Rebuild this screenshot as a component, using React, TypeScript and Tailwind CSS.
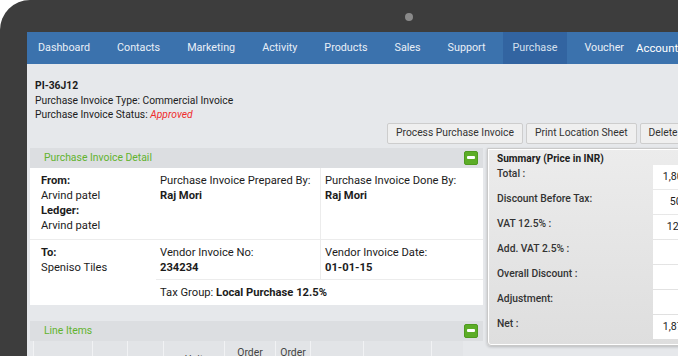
import React from "react";

const navItems = ["Dashboard", "Contacts", "Marketing", "Activity", "Products", "Sales", "Support", "Purchase", "Voucher"];

const summaryRows = [
  { label: "Total :", value: "1,800.00" },
  { label: "Discount Before Tax:", value: "50.00" },
  { label: "VAT 12.5% :", value: "125.00" },
  { label: "Add. VAT 2.5% :", value: "" },
  { label: "Overall Discount :", value: "" },
  { label: "Adjustment:", value: "" },
  { label: "Net :", value: "1,875.00" },
];

const lineCols = [
  { w: "w-[59px]", top: "", bottom: "" },
  { w: "w-[35px]", top: "", bottom: "" },
  { w: "w-[36px]", top: "", bottom: "" },
  { w: "w-[61px]", top: "Unit", bottom: "" },
  { w: "w-[51px]", top: "Order", bottom: "Qty" },
  { w: "w-[35px]", top: "Order", bottom: "Rate" },
  { w: "w-[53px]", top: "", bottom: "" },
  { w: "w-[68px]", top: "", bottom: "" },
  { w: "w-[32px]", top: "", bottom: "" },
];

const MinusBtn = () => (
  <div className="w-[14px] h-[14px] rounded-[2px] bg-[#5cad27] border border-[#4e9a1f] flex items-center justify-center">
    <div className="w-[8px] h-[3px] bg-white rounded-[1px]" />
  </div>
);

const PanelHeader = ({ title }: { title: string }) => (
  <div className="h-[20px] bg-[#dcdee1] flex items-center justify-between pl-[14px] pr-[5px]">
    <span className="text-[10.4px] text-[#62b32e]">{title}</span>
    <MinusBtn />
  </div>
);

export default function App() {
  return (
    <div className="w-[678px] h-[356px] overflow-hidden bg-white" style={{ fontFamily: "Roboto, 'Liberation Sans', sans-serif" }}>
      <div className="relative w-[760px] h-full bg-[#3d3d3d] rounded-tl-[30px] pl-[27px] pt-[32px]">
        {/* camera */}
        <div className="absolute left-[405px] top-[13px] w-[8px] h-[8px] rounded-full bg-[#8a8a8a]" />

        <div className="w-[733px] h-full bg-[#e6e8eb]">
          {/* nav */}
          <div className="h-[32px] bg-[#3b72ad] flex items-stretch pl-[1px] gap-[7px] text-[10.75px] text-[#e9eff7]">
            {navItems.map((n) => (
              <div key={n} className={`px-[10px] flex items-center ${n === "Purchase" ? "bg-[#3264a1] text-[#d5e0ee]" : ""}`}>
                {n}
              </div>
            ))}
            <div className="-ml-[5px] flex items-center pt-[1px] text-[11.4px] text-white">Accounts</div>
          </div>

          <div className="pl-[3px]">
            {/* invoice info */}
            <div className="pl-[5px] pt-[15px] text-[10.3px] leading-[14.5px] text-[#1c1c1c]">
              <div className="font-bold">PI-36J12</div>
              <div>Purchase Invoice Type: Commercial Invoice</div>
              <div>
                Purchase Invoice Status: <span className="italic text-[#ef2b2b]">Approved</span>
              </div>
            </div>

            {/* buttons */}
            <div className="flex gap-[3px] ml-[357px]">
              {["Process Purchase Invoice", "Print Location Sheet", "Delete"].map((b) => (
                <div key={b} className="h-[21px] px-[8px] flex items-center whitespace-nowrap border border-[#cdcdcd] bg-[#efefef] rounded-[2px] text-[10.3px] text-[#333]">
                  {b}
                </div>
              ))}
            </div>

            <div className="flex gap-[4px] mt-[4px]">
              {/* left column */}
              <div className="w-[453px] shrink-0">
                <PanelHeader title="Purchase Invoice Detail" />
                <div className="bg-white grid grid-cols-[126px_164px_163px] grid-rows-[72px_40px_25px] text-[11.2px] leading-[15px] text-[#1c1c1c]">
                  <div className="pl-[11px] pt-[5px] border-b border-[#ececec]">
                    <div className="font-bold">From:</div>
                    <div>Arvind patel</div>
                    <div className="font-bold">Ledger:</div>
                    <div>Arvind patel</div>
                  </div>
                  <div className="pl-[4px] pt-[5px] border-b border-[#ececec]">
                    <div>Purchase Invoice Prepared By:</div>
                    <div className="font-bold">Raj Mori</div>
                  </div>
                  <div className="pl-[4px] pt-[5px] border-b border-l border-[#ececec]">
                    <div>Purchase Invoice Done By:</div>
                    <div className="font-bold">Raj Mori</div>
                  </div>
                  <div className="row-span-2 pl-[11px] pt-[5px]">
                    <div className="font-bold">To:</div>
                    <div>Speniso Tiles</div>
                  </div>
                  <div className="pl-[4px] pt-[5px] border-b border-[#ececec]">
                    <div>Vendor Invoice No:</div>
                    <div className="font-bold">234234</div>
                  </div>
                  <div className="pl-[4px] pt-[5px] border-b border-l border-[#ececec]">
                    <div>Vendor Invoice Date:</div>
                    <div className="font-bold">01-01-15</div>
                  </div>
                  <div className="col-span-2 pl-[4px] flex items-center">
                    <span>
                      Tax Group: <span className="font-bold">Local Purchase 12.5%</span>
                    </span>
                  </div>
                </div>

                <div className="mt-[16px]">
                  <PanelHeader title="Line Items" />
                  <div className="ml-[3px] flex h-[38px] text-[10.4px] leading-[14px] text-[#444]">
                    {lineCols.map((c, i) => (
                      <div key={i} className={`${c.w} bg-[#e2e4e7] border-l border-[#f1f2f4] flex flex-col items-center justify-center text-center`}>
                        {c.top && <span>{c.top}</span>}
                        {c.bottom && <span>{c.bottom}</span>}
                      </div>
                    ))}
                  </div>
                </div>
              </div>

              {/* summary */}
              <div className="w-[250px] h-[198px] shrink-0 rounded-bl-[4px] border border-[#c9c9c9] shadow-[0_1px_3px_rgba(0,0,0,0.2)] bg-gradient-to-b from-[#ececec] to-[#dedede] ring-1 ring-inset ring-white text-[10.3px] text-[#333]">
                <div className="pl-[9px] pt-[3px] leading-[13px] font-bold text-[10.1px] text-[#1c1c1c]">Summary (Price in INR)</div>
                <div className="flex flex-col gap-[1px]">
                  {summaryRows.map((r) => (
                    <div key={r.label} className="flex h-[24px]">
                      <div className="w-[165px] pl-[9px] pt-[2px] leading-[14px] font-medium">{r.label}</div>
                      <div className="w-[60px] bg-white text-center leading-[24px] text-[10.6px] text-[#1c1c1c]">{r.value}</div>
                    </div>
                  ))}
                </div>
              </div>
            </div>
          </div>
        </div>
      </div>
    </div>
  );
}
